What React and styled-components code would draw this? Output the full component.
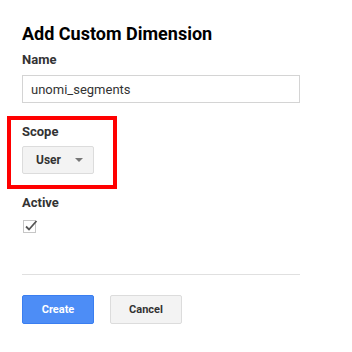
import styled, { createGlobalStyle } from "styled-components";

const GlobalStyle = createGlobalStyle`
  body {
    margin: 0;
    background: #fff;
    font-family: Roboto, "Liberation Sans", Arial, sans-serif;
    color: #222;
  }
`;

const Page = styled.div`
  padding: 22px 0 0 22px;
  width: 278px;
`;

const Title = styled.h1`
  margin: 0;
  font-size: 18px;
  line-height: 24px;
  font-weight: 700;
  color: #000;
`;

const Label = styled.div`
  font-size: 13px;
  line-height: 16px;
  font-weight: 700;
  color: #333;
  margin-top: ${(p) => p.top || 0}px;
`;

const TextInput = styled.input`
  display: block;
  box-sizing: border-box;
  width: 278px;
  height: 28px;
  margin-top: 7px;
  padding: 0 8px;
  border: 1px solid #d4d4d4;
  font-family: Roboto, "Liberation Sans", Arial, sans-serif;
  font-size: 13px;
  color: #333;
  outline: none;
`;

const Highlight = styled.div`
  box-sizing: border-box;
  width: 110px;
  height: 73px;
  margin: 13px 0 0 -15px;
  padding: 4px 0 0 11px;
  border: 4px solid #ff0000;
`;

const Select = styled.button`
  display: flex;
  align-items: center;
  box-sizing: border-box;
  width: 72px;
  height: 28px;
  margin-top: 6px;
  padding: 0 0 0 13px;
  border: 1px solid #dcdcdc;
  border-radius: 2px;
  background: #f3f3f3;
  font-family: Roboto, "Liberation Sans", Arial, sans-serif;
  font-size: 12px;
  font-weight: 700;
  color: #333;
`;

const Caret = styled.span`
  margin-left: 14px;
  width: 0;
  height: 0;
  border-left: 4px solid transparent;
  border-right: 4px solid transparent;
  border-top: 4px solid #777;
`;

const Check = styled.span`
  display: block;
  position: relative;
  box-sizing: border-box;
  width: 13px;
  height: 13px;
  margin: 9px 0 0 1px;
  border: 1px solid #c6c6c6;
  background: #fff;
`;

const Tick = styled.svg`
  position: absolute;
  left: 0;
  top: -2px;
`;

const Divider = styled.hr`
  margin: 41px 0 0;
  border: 0;
  border-top: 1px solid #e0e0e0;
  width: 278px;
`;

const Actions = styled.div`
  display: flex;
  gap: 16px;
  margin-top: 20px;
`;

const Button = styled.button`
  box-sizing: border-box;
  width: 72px;
  height: 29px;
  border-radius: 2px;
  font-family: Roboto, "Liberation Sans", Arial, sans-serif;
  font-size: 11px;
  font-weight: 700;
  border: 1px solid ${(p) => (p.primary ? "#3a7ef0" : "#dcdcdc")};
  background: ${(p) => (p.primary ? "#4d8df6" : "#f3f3f3")};
  color: ${(p) => (p.primary ? "#fff" : "#333")};
`;

export default function App() {
  return (
    <>
      <GlobalStyle />
      <Page>
        <Title>Add Custom Dimension</Title>
        <Label top={6}>Name</Label>
        <TextInput defaultValue="unomi_segments" />
        <Highlight>
          <Label>Scope</Label>
          <Select>
            User
            <Caret />
          </Select>
        </Highlight>
        <Label top={6}>Active</Label>
        <Check>
          <Tick width="14" height="13" viewBox="0 0 14 13">
            <path d="M2 7.5 L5 10.5 L12.5 2" fill="none" stroke="#555" strokeWidth="1.8" />
          </Tick>
        </Check>
        <Divider />
        <Actions>
          <Button primary>Create</Button>
          <Button>Cancel</Button>
        </Actions>
      </Page>
    </>
  );
}
